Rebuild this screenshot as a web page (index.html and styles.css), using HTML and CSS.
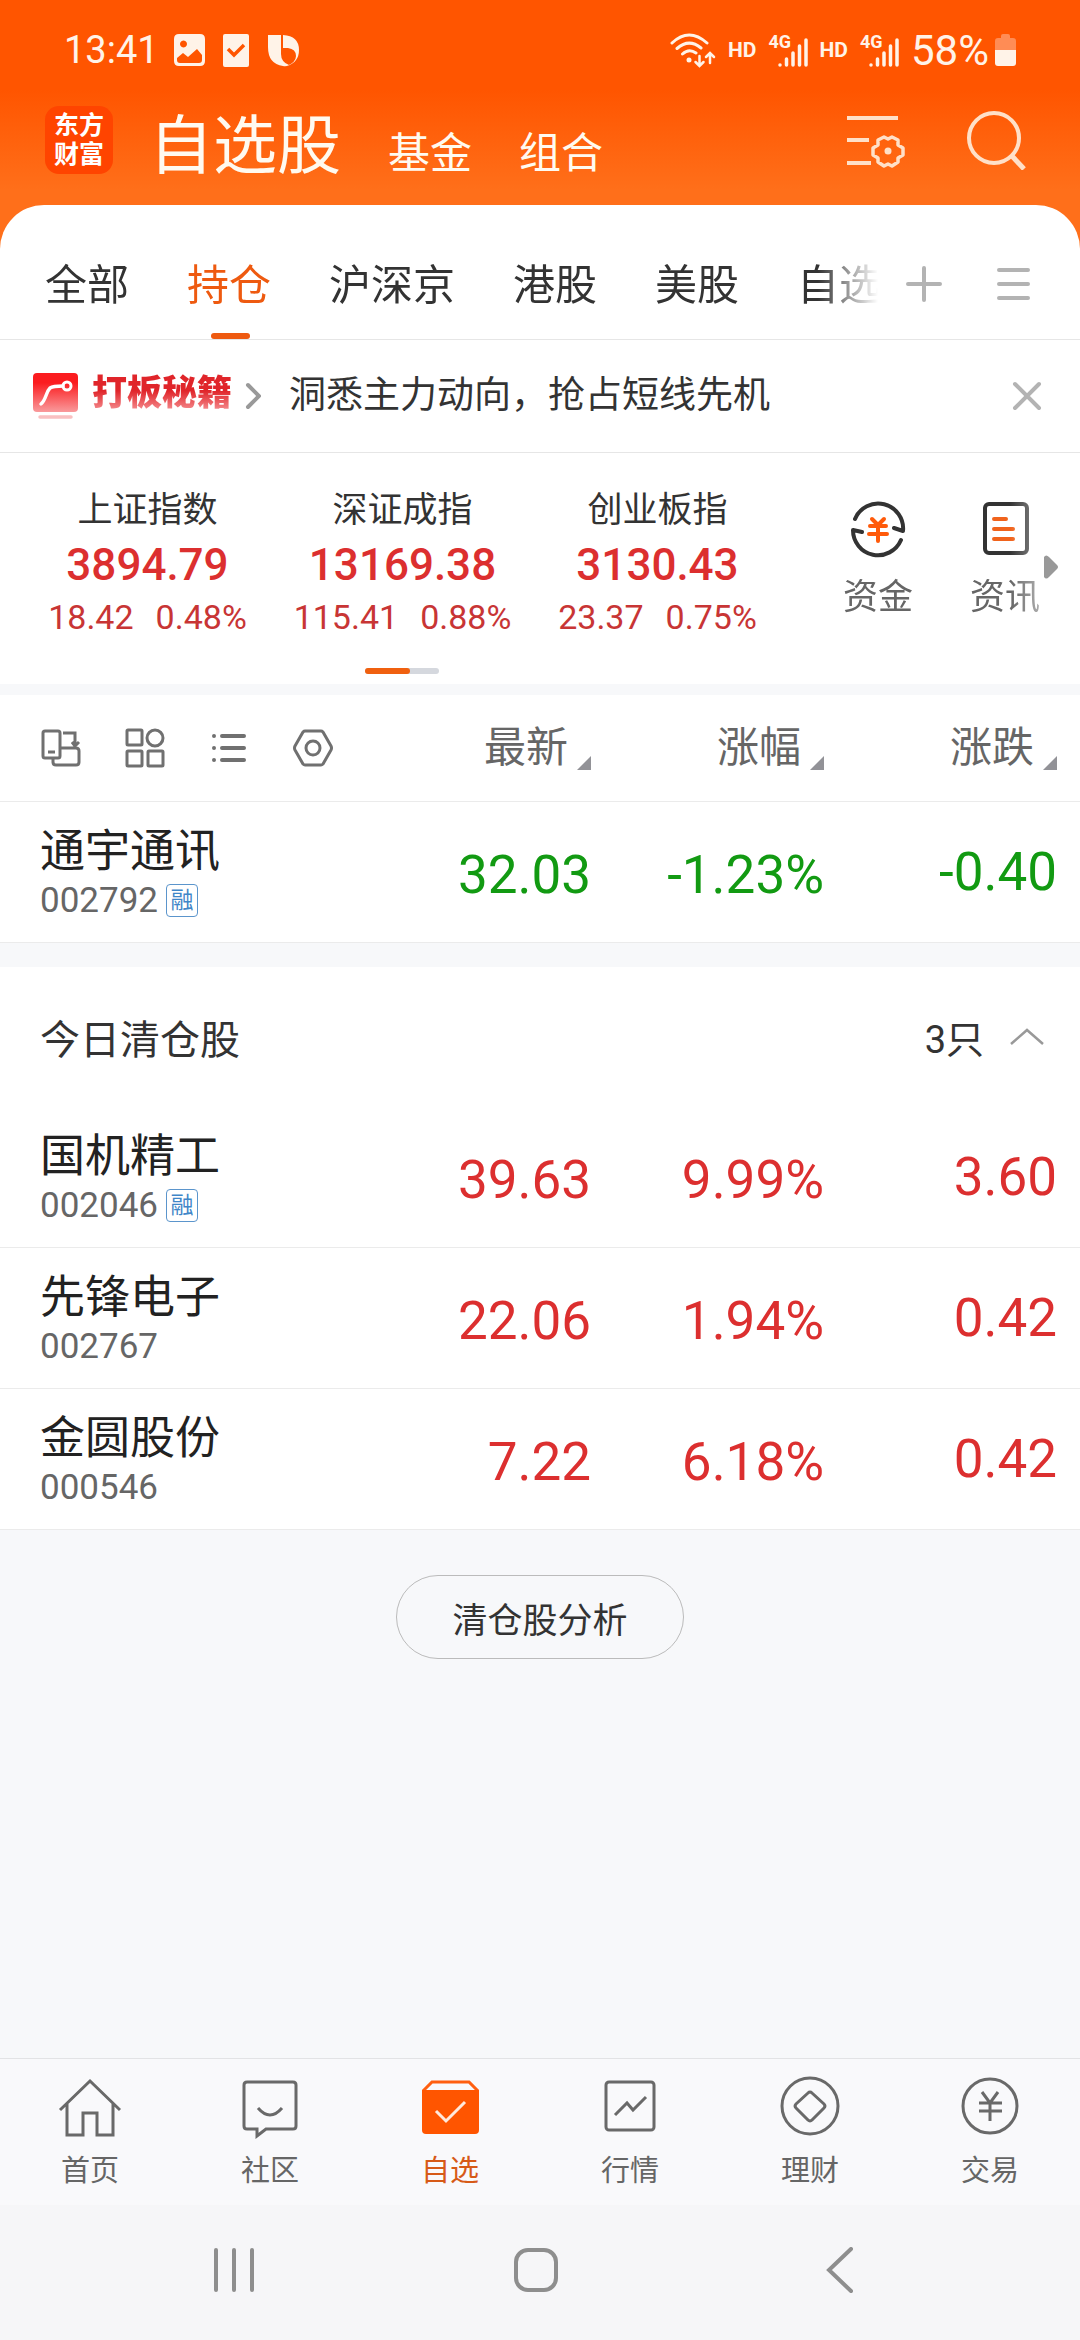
FILE: index.html
```html
<!DOCTYPE html>
<html lang="zh-CN">
  <head>
    <meta charset="UTF-8" />
    <meta name="viewport" content="width=device-width, initial-scale=1.0" />
    <title>自选股</title>
    <link rel="stylesheet" href="styles.css">
  </head>
  <body>
    <header class="top">
      <div class="status">
        <span class="clock">13:41</span>
        <svg width="31" height="32" viewBox="0 0 31 32">
          <path fill="currentColor" fill-rule="evenodd" d="M5 0h21q5 0 5 5v22q0 5-5 5H5q-5 0-5-5V5q0-5 5-5zM3 24v2q0 3 3 3h19q3 0 3-3v-5l-5-6-9 8-5-4zM9.500 6.500a3.500 3.500 0 1 0 .01 0z" />
        </svg>
        <svg width="26" height="33" viewBox="0 0 26 33">
          <rect width="26" height="33" rx="2" fill="currentColor" />
          <path d="M5 15l6 6 10-10" fill="none" stroke="#ff5500" stroke-width="3.500" />
        </svg>
        <svg width="33" height="33" viewBox="0 0 33 33">
          <path fill="currentColor" d="M1 1h13v19q0 8 8 11-3 2-6 1Q1 30 1 13z" />
          <path fill="currentColor" d="M16 1q16 1 16 15 0 12-12 16 9-4 9-10 0-7-8-8h-5z" />
        </svg>
        <svg class="wifi" width="46" height="35" viewBox="0 0 46 35">
          <g fill="none" stroke="currentColor" stroke-width="3" stroke-linecap="round">
            <path d="M2 10Q19-6 37 10M7 15.500Q19 5 31 15M12.500 21Q19 15 26 20" />
            <path d="M29.500 23v9M25.500 29l4 4 4-4M40 30v-9M36 24l4-4 4 4" stroke-width="2.500" />
          </g>
          <circle cx="19" cy="27" r="2.500" fill="currentColor" />
        </svg>
        <span class="hd">HD</span>
        <span class="signal">
          <span class="net">4G</span>
          <svg width="39" height="35" viewBox="0 0 39 35">
            <path d="M11 32v.01M17.500 26v6M24 20v12M30.500 13v19M37 7v25" stroke="currentColor" stroke-width="3.500" stroke-linecap="round" />
          </svg>
        </span>
        <span class="hd">HD</span>
        <span class="signal">
          <span class="net">4G</span>
          <svg width="39" height="35" viewBox="0 0 39 35">
            <path d="M11 32v.01M17.500 26v6M24 20v12M30.500 13v19M37 7v25" stroke="currentColor" stroke-width="3.500" stroke-linecap="round" />
          </svg>
        </span>
        <span class="power">
          58%
          <svg width="21" height="32" viewBox="0 0 21 32">
            <path d="M6 4V2q0-2 2-2h5q2 0 2 2v2h3q3 0 3 3v9H0V7q0-3 3-3z" fill="#ff8c55" />
            <path d="M0 16h21v13q0 3-3 3H3q-3 0-3-3z" fill="currentColor" />
          </svg>
        </span>
      </div>
      <div class="title-bar">
        <a class="logo" href="#">东方<br>财富</a>
        <nav class="title-nav">
          <h1>自选股</h1>
          <a href="#">基金</a>
          <a href="#">组合</a>
        </nav>
        <button aria-label="设置">
          <svg width="60" height="60" viewBox="0 0 60 60" fill="none" stroke="currentColor" stroke-width="4">
            <path d="M1 8h51M1 30h22M1 53h24" />
            <path stroke-width="3.500" stroke-linejoin="round" d="M57 38v7l-5 3v4l-6 4-4-2-4 2-6-4v-4l-5-3v-7l5-3v-5l6-3 4 2 4-2 6 3v5z" />
            <circle cx="42" cy="41" r="3.500" fill="currentColor" stroke="none" />
          </svg>
        </button>
        <button aria-label="搜索">
          <svg width="60" height="60" viewBox="0 0 60 60" fill="none" stroke="currentColor" stroke-width="4">
            <circle cx="28" cy="28" r="25" />
            <path d="M46 46l12 13" stroke-width="5" />
          </svg>
        </button>
      </div>
    </header>

    <main>
      <div class="tabs">
        <nav class="tab-list">
          <a href="#">全部</a>
          <a href="#" class="active">持仓</a>
          <a href="#">沪深京</a>
          <a href="#">港股</a>
          <a href="#">美股</a>
          <a href="#">自选</a>
        </nav>
        <button aria-label="添加分组">
          <svg width="36" height="36" viewBox="0 0 36 36"><path d="M18 2v32M2 18h32" /></svg>
        </button>
        <button aria-label="分组管理">
          <svg width="36" height="36" viewBox="0 0 36 36"><path d="M3 4h29M3 18h29M3 32h29" /></svg>
        </button>
      </div>

      <div class="promo">
        <a class="promo-link" href="#">
          <svg width="46" height="48" viewBox="0 0 46 48">
            <defs>
              <linearGradient id="red" x1="0" y1="0" x2="0" y2="1">
                <stop offset="0.250" stop-color="#fb1c1f" />
                <stop offset="1" stop-color="#f99a9c" />
              </linearGradient>
            </defs>
            <rect x="0" y="1" width="45" height="39" rx="4" fill="url(#red)" />
            <path d="M8 32c5-4 5-12 9-16q3-2 13-2" fill="none" stroke="#fff" stroke-width="3.500" stroke-linecap="round" />
            <circle cx="34" cy="14" r="4" fill="none" stroke="#fff" stroke-width="3" />
            <path d="M7 45h31" stroke="#f9c0c1" stroke-width="3.500" stroke-linecap="round" />
          </svg>
          <strong>打板秘籍</strong>
          <svg class="chevron" width="16" height="28" viewBox="0 0 16 28"><path d="M3 3l11 11L3 25" /></svg>
          <span>洞悉主力动向，抢占短线先机</span>
        </a>
        <button aria-label="关闭">
          <svg width="30" height="30" viewBox="0 0 30 30"><path d="M3 3l24 24M27 3L3 27" /></svg>
        </button>
      </div>

      <section class="market">
        <div class="market-row">
          <a class="index" href="#">
            <span class="index-name">上证指数</span>
            <b>3894.79</b>
            <span class="change"><span>18.42</span><span>0.48%</span></span>
          </a>
          <a class="index" href="#">
            <span class="index-name">深证成指</span>
            <b>13169.38</b>
            <span class="change"><span>115.41</span><span>0.88%</span></span>
          </a>
          <a class="index" href="#">
            <span class="index-name">创业板指</span>
            <b>3130.43</b>
            <span class="change"><span>23.37</span><span>0.75%</span></span>
          </a>
          <div class="tools">
            <a href="#">
              <svg width="60" height="60" viewBox="0 0 60 60" fill="none" stroke="#333" stroke-width="4" stroke-linecap="round" stroke-linejoin="round">
                <path d="M7 20A25 25 0 0 1 55 32l-9-3M53 41A25 25 0 0 1 5 31l9 2" />
                <path stroke="#ff5a0a" d="M24 20l6 6 6-6M22 27h16M21 35h18M30 27v15" />
              </svg>
              资金
            </a>
            <a href="#">
              <svg width="60" height="60" viewBox="0 0 60 60" fill="none" stroke="#333" stroke-width="4" stroke-linecap="round">
                <rect x="10" y="5" width="42" height="49" rx="4" />
                <path stroke="#f0631c" d="M19 20h12M19 30h19M19 40h19" />
              </svg>
              资讯
            </a>
          </div>
          <svg class="more" width="14" height="24" viewBox="0 0 14 24"><path fill="#999" d="M0 2q2-3 5 0l8 8q2 2 0 4l-8 8q-3 3-5 0z" /></svg>
        </div>
        <div class="pager"><span></span></div>
      </section>

      <table class="stocks">
        <thead>
          <tr>
            <th class="modes">
              <div class="mode-list">
                <button aria-label="横屏">
                  <svg width="40" height="40" viewBox="0 0 40 40">
                    <rect x="2" y="3" width="17" height="27" rx="2" />
                    <path d="M7 24h7M22 5h12v12M31 14l3 4 4-4M20 20h15q3 0 3 3v11q0 3-3 3H15q-3 0-3-3v-3" />
                  </svg>
                </button>
                <button aria-label="宫格">
                  <svg width="40" height="40" viewBox="0 0 40 40">
                    <rect x="2" y="2" width="15" height="15" rx="1" />
                    <circle cx="30" cy="10" r="8" />
                    <rect x="2" y="23" width="15" height="15" rx="1" />
                    <rect x="23" y="23" width="15" height="15" rx="1" />
                  </svg>
                </button>
                <button aria-label="列表">
                  <svg width="40" height="40" viewBox="0 0 40 40" stroke-linecap="round">
                    <path stroke-width="4" d="M5 8v.01M5 20v.01M5 32v.01M13 8h22M13 20h22M13 32h22" />
                  </svg>
                </button>
                <button aria-label="列表设置">
                  <svg width="40" height="40" viewBox="0 0 40 40">
                    <path stroke-linejoin="round" d="M12 3h16q1 0 2 1l8 14q1 2 0 4l-8 14q-1 1-2 1H12q-1 0-2-1L2 22q-1-2 0-4l8-14q1-1 2-1z" />
                    <circle cx="20" cy="20" r="7" />
                  </svg>
                </button>
              </div>
            </th>
            <th><button class="sort">最新</button></th>
            <th><button class="sort">涨幅</button></th>
            <th><button class="sort">涨跌</button></th>
          </tr>
        </thead>
        <tbody>
          <tr class="down">
            <td><a class="name" href="#">通宇通讯</a><span class="code">002792<i>融</i></span></td>
            <td>32.03</td>
            <td>-1.23%</td>
            <td>-0.40</td>
          </tr>
        </tbody>
      </table>

      <section class="closed">
        <div class="closed-head">
          <h2>今日清仓股</h2>
          <button>
            3只
            <svg width="34" height="18" viewBox="0 0 34 18"><path d="M1 16L17 2l16 14" fill="none" stroke="#999" stroke-width="2.500" /></svg>
          </button>
        </div>
        <table class="stocks">
          <tbody>
            <tr class="up">
              <td><a class="name" href="#">国机精工</a><span class="code">002046<i>融</i></span></td>
              <td>39.63</td>
              <td>9.99%</td>
              <td>3.60</td>
            </tr>
            <tr class="up">
              <td><a class="name" href="#">先锋电子</a><span class="code">002767</span></td>
              <td>22.06</td>
              <td>1.94%</td>
              <td>0.42</td>
            </tr>
            <tr class="up">
              <td><a class="name" href="#">金圆股份</a><span class="code">000546</span></td>
              <td>7.22</td>
              <td>6.18%</td>
              <td>0.42</td>
            </tr>
          </tbody>
        </table>
      </section>

      <button class="analyse">清仓股分析</button>
    </main>

    <footer>
      <nav class="tabbar">
        <a href="#">
          <svg width="64" height="64" viewBox="0 0 64 64">
            <path d="M2 35L32 6l30 29M9 29v31h16V38h14v22h16V29" />
          </svg>
          首页
        </a>
        <a href="#">
          <svg width="64" height="64" viewBox="0 0 64 64">
            <path d="M9 7h46q3 0 3 3v41q0 3-3 3H28l-9 7v-7H9q-3 0-3-3V10q0-3 3-3z" />
            <path d="M20 33q12 14 24 0" />
          </svg>
          社区
        </a>
        <a href="#" class="active">
          <svg width="64" height="64" viewBox="0 0 64 64">
            <path d="M5 16l9-9h37l9 9" />
            <path d="M4 15h57v40q0 4-4 4H8q-4 0-4-4z" fill="#ff5500" stroke="none" />
            <path d="M18 36l10 10 19-19" stroke="#ffe9dc" />
          </svg>
          自选
        </a>
        <a href="#">
          <svg width="64" height="64" viewBox="0 0 64 64">
            <rect x="8" y="7" width="48" height="48" rx="3" />
            <path d="M17 40l12-12 6 7 13-13" />
          </svg>
          行情
        </a>
        <a href="#">
          <svg width="64" height="64" viewBox="0 0 64 64">
            <circle cx="32" cy="31" r="28" />
            <path d="M30 18q2-2 4 0l12 11q2 2 0 4L34 45q-2 2-4 0L18 33q-2-2 0-4z" />
          </svg>
          理财
        </a>
        <a href="#">
          <svg width="64" height="64" viewBox="0 0 64 64">
            <circle cx="32" cy="31" r="27" />
            <path d="M24 17l8 11 8-11M21 28h23M21 36h23M32 28v18" />
          </svg>
          交易
        </a>
      </nav>
      <div class="system">
        <button aria-label="最近任务">
          <svg width="44" height="46" viewBox="0 0 44 46"><path d="M4 3v40M22 3v40M40 3v40" /></svg>
        </button>
        <button aria-label="主屏幕">
          <svg width="44" height="46" viewBox="0 0 44 46"><rect x="2" y="3" width="40" height="40" rx="12" /></svg>
        </button>
        <button aria-label="返回">
          <svg width="44" height="46" viewBox="0 0 44 46"><path d="M35 2L13 23l22 21" /></svg>
        </button>
      </div>
    </footer>
  </body>
</html>
```

FILE: styles.css
```css
* {
  box-sizing: border-box;
}

body {
  margin: 0;
  min-height: 100vh;
  display: flex;
  flex-direction: column;
  font-family: Roboto, "Noto Sans CJK SC", sans-serif;
  color: #333;
  background-color: #f7f8fa;
}

a {
  color: inherit;
  text-decoration: none;
}

button {
  padding: 0;
  border: none;
  background: none;
  font: inherit;
  color: inherit;
  cursor: pointer;
}

svg {
  display: block;
  flex: none;
}

h1,
h2 {
  margin: 0;
  font-weight: 400;
}

/* Orange header */
.top {
  padding-bottom: 58px;
  color: #fff3e8;
  background: linear-gradient(#ff5500 90px, #ff6f1a 190px);
}

.status {
  height: 88px;
  padding: 12px 64px 0;
  display: flex;
  align-items: center;
  gap: 12px;
}

.status > svg + svg {
  margin-left: 6px;
}

.status > .wifi {
  margin-left: auto;
}

.clock {
  font-size: 38px;
  margin-right: 3px;
}

.hd {
  font-size: 21px;
  font-weight: 700;
}

.signal {
  position: relative;
}

.net {
  position: absolute;
  left: 0;
  top: 0;
  font-size: 18px;
  font-weight: 700;
  line-height: 18px;
}

.power {
  display: flex;
  align-items: center;
  gap: 6px;
  font-size: 42px;
}

.title-bar {
  height: 104px;
  padding: 0 54px 0 45px;
  display: flex;
  align-items: center;
  color: #ffe0c8;
}

.title-bar button + button {
  margin-left: 60px;
}

.logo {
  width: 68px;
  height: 68px;
  padding-top: 5px;
  border-radius: 14px;
  background-color: #ff4400;
  color: #fff;
  font-size: 25px;
  font-weight: 700;
  line-height: 29px;
  text-align: center;
}

.title-nav {
  flex: 1;
  margin-left: 36px;
  display: flex;
  align-items: baseline;
  gap: 47px;
  font-size: 42px;
  color: #fffaf0;
}

h1 {
  font-size: 64px;
}

/* White sheet */
main {
  flex: 1;
  margin-top: -45px;
  display: flex;
  flex-direction: column;
}

.tabs {
  height: 135px;
  padding: 0 48px 0 45px;
  display: flex;
  align-items: center;
  background-color: #fff;
  border-bottom: 1px solid #e6e6e6;
  border-radius: 44px 44px 0 0;
}

.tab-list {
  flex: 1;
  height: 100%;
  padding-top: 26px;
  display: flex;
  gap: 58px;
  overflow: hidden;
  white-space: nowrap;
  font-size: 42px;
  -webkit-mask-image: linear-gradient(to left, transparent, #000 60px);
  mask-image: linear-gradient(to left, transparent, #000 60px);
}

.tab-list a {
  line-height: 110px;
}

.tab-list .active {
  position: relative;
  color: #ee5a10;
}

.tab-list .active::after {
  content: "";
  position: absolute;
  left: 50%;
  bottom: 0;
  width: 39px;
  height: 6px;
  margin-left: -18px;
  border-radius: 3px;
  background-color: #ee5a10;
}

.tabs button {
  margin: 24px 0 0 28px;
}

.tabs button + button {
  margin-left: 54px;
}

.tabs button path,
.promo button path,
.chevron path {
  fill: none;
  stroke: #b3b3b3;
  stroke-width: 4;
  stroke-linecap: round;
}

.chevron path {
  stroke: #999;
}

.promo {
  height: 113px;
  padding: 0 38px 0 33px;
  display: flex;
  align-items: center;
  justify-content: space-between;
  background-color: #fff;
  border-bottom: 1px solid #e6e6e6;
}

.promo-link {
  display: flex;
  align-items: center;
  font-size: 37px;
  line-height: 52px;
}

.promo strong {
  margin: 0 13px;
  padding-bottom: 4px;
  font-size: 35px;
  font-weight: 900;
  line-height: 48px;
  background: linear-gradient(#e0252a 40%, #f9a0a2 85%);
  -webkit-background-clip: text;
  background-clip: text;
  color: transparent;
}

.chevron {
  margin-right: 28px;
}

/* Indices */
.market {
  height: 231px;
  padding-top: 36px;
  background-color: #fff;
}

.market-row {
  display: flex;
  padding: 0 22px 0 20px;
}

.index {
  width: 255px;
  display: flex;
  flex-direction: column;
  align-items: center;
  color: #dc2f2f;
}

.index-name {
  font-size: 35px;
  line-height: 44px;
  color: #333;
}

.index b {
  font-size: 44px;
  font-weight: 500;
  line-height: 64px;
}

.change {
  display: flex;
  gap: 22px;
  font-size: 34px;
  line-height: 40px;
  color: #c83535;
}

.tools {
  flex: 1;
  display: flex;
  justify-content: flex-end;
  gap: 57px;
  font-size: 35px;
  line-height: 44px;
  color: #666;
  -webkit-mask-image: linear-gradient(to left, #0008, #000 30px);
  mask-image: linear-gradient(to left, #0008, #000 30px);
}

.tools a {
  display: flex;
  flex-direction: column;
  align-items: center;
  gap: 17px;
  padding-top: 10px;
}

.more {
  margin: 66px 0 0 4px;
}

.pager {
  width: 74px;
  height: 6px;
  margin: 31px 0 0 365px;
  border-radius: 3px;
  background-color: #d5d8de;
}

.pager span {
  display: block;
  width: 45px;
  height: 6px;
  border-radius: 3px;
  background-color: #f0600f;
}

/* Stock tables */
.stocks {
  width: 100%;
  margin-top: 11px;
  border-collapse: collapse;
  table-layout: fixed;
  background-color: #fff;
}

.stocks th {
  width: 233px;
  height: 106px;
  padding: 0;
  font-weight: 400;
  text-align: right;
  border-bottom: 1px solid #ebebeb;
}

.stocks td {
  width: 233px;
  height: 141px;
  padding: 6px 0 0;
  font-size: 53px;
  text-align: right;
  border-bottom: 1px solid #ebebeb;
}

.stocks th:first-child,
.stocks td:first-child {
  width: auto;
  padding-top: 4px;
  padding-left: 40px;
  text-align: left;
}

.stocks th:last-child,
.stocks td:last-child {
  width: 256px;
  padding-right: 23px;
}

.stocks td:last-child {
  padding-bottom: 6px;
}

.mode-list {
  display: flex;
  gap: 44px;
  padding: 0 0 4px 1px;
}

.mode-list svg {
  fill: none;
  stroke: #707070;
  stroke-width: 3;
}

.sort {
  font-size: 42px;
  line-height: 48px;
  color: #666;
}

.sort::after {
  content: "";
  display: inline-block;
  margin: 0 0 -8px 9px;
  border-left: 14px solid transparent;
  border-bottom: 14px solid #929297;
}

.name {
  display: block;
  font-size: 45px;
  line-height: 54px;
  color: #222;
}

.code {
  display: flex;
  align-items: center;
  gap: 8px;
  font-size: 35px;
  line-height: 44px;
  color: #666;
}

.code i {
  width: 32px;
  height: 33px;
  border: 1px solid #5b95cc;
  border-radius: 4px;
  font-size: 23px;
  font-style: normal;
  line-height: 31px;
  text-align: center;
  color: #3f86c8;
}

.up {
  color: #dc2f2f;
}

.down {
  color: #129a12;
}

.closed {
  margin-top: 24px;
  background-color: #fff;
}

.closed .stocks {
  margin-top: 0;
}

.closed-head {
  height: 140px;
  padding: 0 36px 0 40px;
  display: flex;
  align-items: center;
  justify-content: space-between;
  font-size: 38px;
}

.closed-head button {
  display: flex;
  align-items: center;
  gap: 26px;
}

h2 {
  font-size: 40px;
}

.analyse {
  align-self: center;
  height: 84px;
  margin: 45px 0;
  padding: 0 55px;
  border: 1px solid #bbb;
  border-radius: 42px;
  font-size: 35px;
}

/* Bottom bars */
.tabbar {
  height: 147px;
  padding-top: 16px;
  display: grid;
  grid-template-columns: repeat(6, 1fr);
  font-size: 29px;
  line-height: 36px;
  color: #666;
  background-color: #f9f9fb;
  border-top: 1px solid #e2e3e5;
}

.tabbar a {
  display: flex;
  flex-direction: column;
  align-items: center;
  gap: 14px;
}

.tabbar svg {
  fill: none;
  stroke: #696969;
  stroke-width: 3;
}

.tabbar .active {
  color: #d75a17;
}

.tabbar .active svg {
  stroke: #ff5f10;
}

.system {
  height: 135px;
  padding: 0 8px 6px 0;
  display: flex;
  align-items: center;
  justify-content: center;
  gap: 258px;
  background-color: #f6f6f8;
}

.system svg {
  fill: none;
  stroke: #8e8e8e;
  stroke-width: 4;
  stroke-linecap: round;
}
```
